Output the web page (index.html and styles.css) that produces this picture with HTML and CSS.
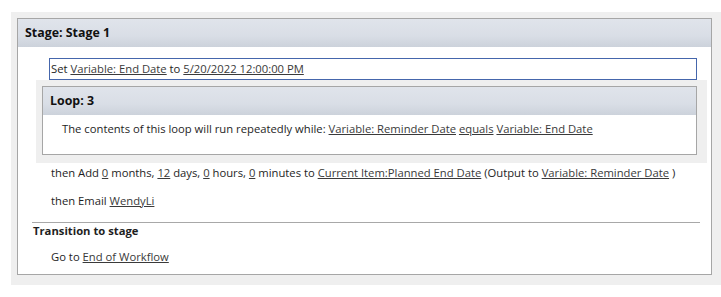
FILE: index.html
```html
<!DOCTYPE html>
<html lang="en">
<head>
  <meta charset="UTF-8">
  <title>Workflow Stage</title>
  <link rel="stylesheet" href="styles.css">
</head>
<body>
  <div class="canvas">
    <div class="stage">
      <div class="stage-head">Stage: Stage 1</div>
      <div class="stage-body">
        <div class="set-row">Set <a href="#">Variable: End Date</a> to <a href="#">5/20/2022 12:00:00 PM</a></div>
        <div class="loop-wrap">
          <div class="loop">
            <div class="loop-head">Loop: 3</div>
            <div class="loop-body">The contents of this loop will run repeatedly while: <a href="#">Variable: Reminder Date</a> <a href="#">equals</a> <a href="#">Variable: End Date</a></div>
          </div>
        </div>
        <div class="step">then Add <a href="#">0</a> months, <a href="#">12</a> days, <a href="#">0</a> hours, <a href="#">0</a> minutes to <a href="#">Current Item:Planned End Date</a> (Output to <a href="#">Variable: Reminder Date</a> )</div>
        <div class="step">then Email <a href="#">WendyLi</a></div>
        <div class="divider"></div>
        <div class="transition-title">Transition to stage</div>
        <div class="step go">Go to <a href="#">End of Workflow</a></div>
      </div>
    </div>
  </div>
</body>
</html>
```
FILE: styles.css
```css
body {
  margin: 0;
  background: #fff;
  font-family: "Open Sans", Arial, sans-serif;
  font-size: 11.25px;
  color: #1e1e1e;
}
a {
  color: #3a3a3a;
  text-decoration: underline;
}
.canvas {
  margin: 12px 0 0 11px;
  padding: 6px 9px 10px 6px;
  background: #efefef;
}
.stage {
  border: 1px solid #a6a6a6;
  background: #fff;
}
.stage-head {
  height: 28px;
  line-height: 28px;
  padding-left: 7px;
  font-size: 12.4px;
  font-weight: bold;
  color: #111;
  background: linear-gradient(#e0e4eb, #d9dee6 60%, #ccd2db);
}
.stage-body {
  padding-top: 11px;
}
.set-row {
  margin: 0 14px 0 31px;
  height: 20px;
  line-height: 20px;
  padding-left: 1px;
  border: 1px solid #4566ac;
}
.loop-wrap {
  margin: 0 4px 0 18px;
  padding: 6px 10px 8px 6px;
  background: #efefef;
}
.loop {
  border: 1px solid #a6a6a6;
  background: #fff;
}
.loop-head {
  height: 28px;
  line-height: 28px;
  padding-left: 7px;
  font-size: 12.4px;
  font-weight: bold;
  color: #111;
  background: linear-gradient(#e0e4eb, #d9dee6 60%, #ccd2db);
}
.loop-body {
  height: 39px;
  padding-left: 19px;
  line-height: 28px;
}
.step {
  height: 28px;
  line-height: 20px;
  padding-left: 33px;
  box-sizing: border-box;
}
.divider {
  height: 0;
  border-top: 1px solid #a8a8a8;
  margin: 3px 11px 0 14px;
}
.transition-title {
  height: 20px;
  line-height: 16px;
  padding-left: 15px;
  font-weight: bold;
}
.step.go {
  padding-top: 4px;
  height: 31px;
}
```
